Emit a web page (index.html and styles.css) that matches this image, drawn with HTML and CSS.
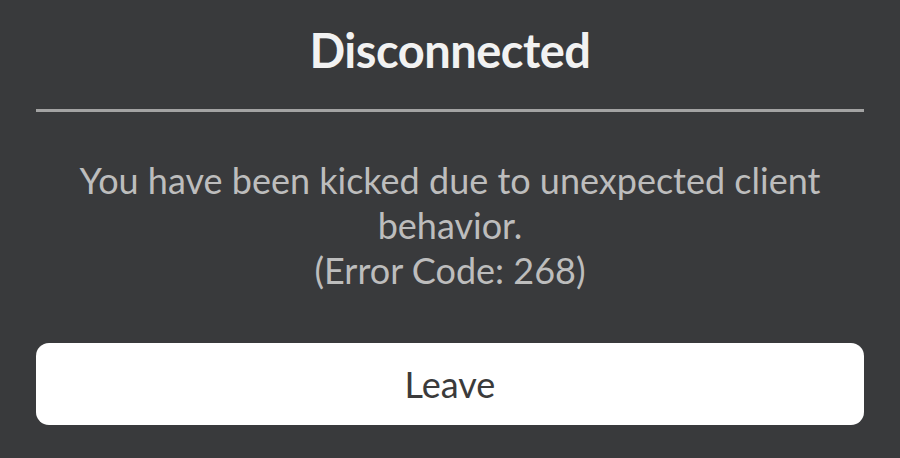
FILE: index.html
```html
<!DOCTYPE html>
<html lang="en">

<head>
    <meta charset="UTF-8">
    <meta name="viewport" content="width=device-width, initial-scale=1.0">
    <title>Disconnected</title>
    <link rel="stylesheet" href="styles.css">
</head>

<body>
    <div class="prompt">
        <h2 class="prompt__title">Disconnected</h2>
        <div class="prompt__divider"></div>
        <p class="prompt__message">
            You have been kicked due to unexpected client behavior.<br>
            (Error Code: 268)
        </p>
        <button class="prompt__button" id="leave">Leave</button>
    </div>
</body>

</html>
```

FILE: styles.css
```css
* {
  margin: 0;
  padding: 0;
  box-sizing: border-box;
}

body {
  height: 100vh;
  width: 100vw;
  background-color: #393a3c;
  font-family: 'Lato', sans-serif;
  overflow: hidden;
}

.prompt {
  display: flex;
  flex-direction: column;
  padding: 0 36px;
}

.prompt__title {
  text-align: center;
  color: #f2f2f2;
  font-size: 47px;
  font-weight: bold;
  line-height: 56px;
  padding-top: 22px;
  letter-spacing: -0.5px;
}

.prompt__divider {
  height: 3px;
  margin-top: 31px;
  background-color: #a3a3a3;
}

.prompt__message {
  text-align: center;
  color: #bdbdbd;
  font-size: 36px;
  line-height: 45px;
  margin-top: 46px;
  padding: 0 30px;
}

.prompt__button {
  height: 82px;
  margin-top: 50px;
  border: none;
  border-radius: 13px;
  background-color: #ffffff;
  color: #3b3b3b;
  font-family: 'Lato', sans-serif;
  font-size: 36px;
  cursor: pointer;
  outline: none;
}
```
